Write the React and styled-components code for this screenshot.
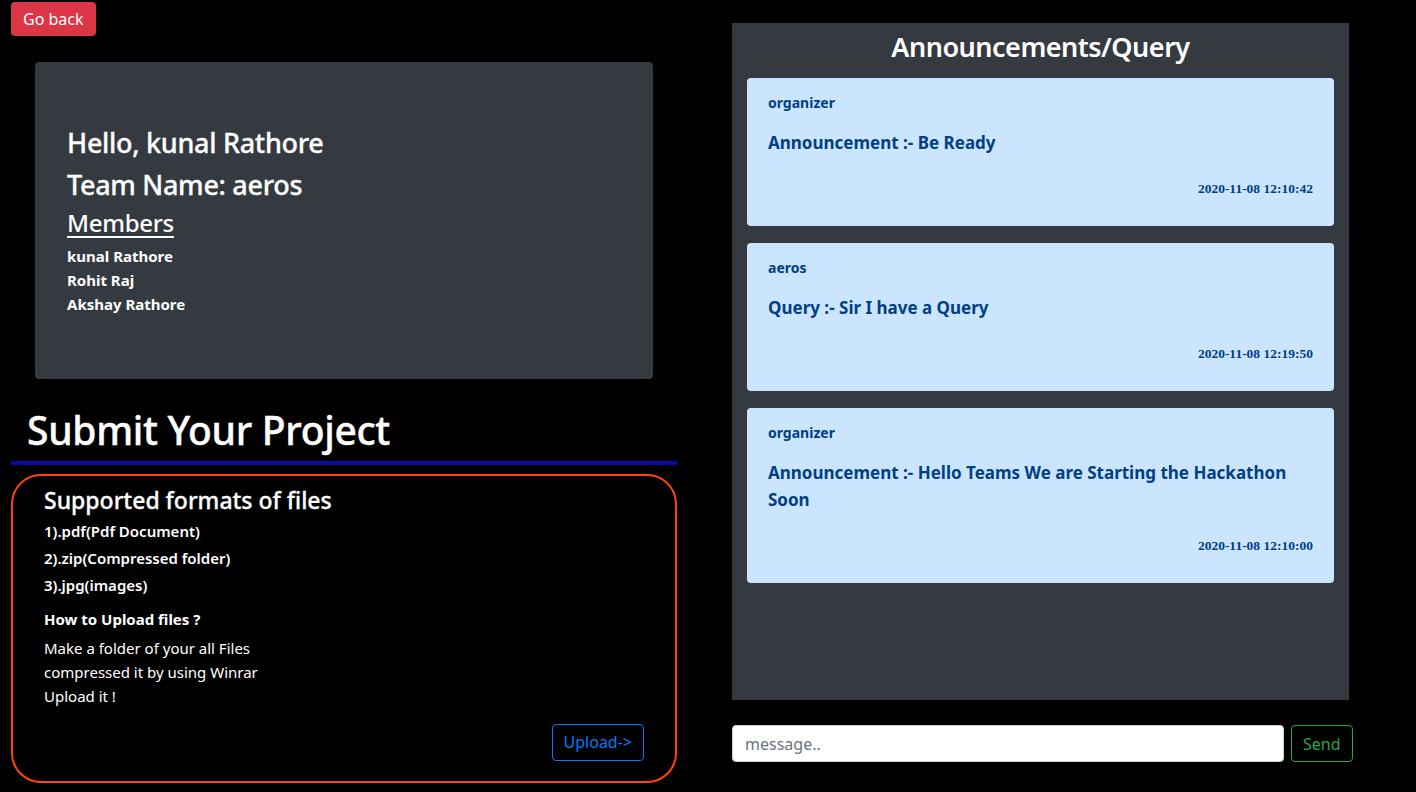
import React from "react";
import styled, { createGlobalStyle } from "styled-components";

const Global = createGlobalStyle`
  html, body {
    margin: 0;
    padding: 0;
    background: #000;
    color: #fff;
    font-family: "Noto Sans", "Open Sans", sans-serif;
    font-size: 16px;
  }
  * { box-sizing: border-box; }
`;

const announcements = [
  { by: "organizer", text: "Announcement :- Be Ready", at: "2020-11-08 12:10:42" },
  { by: "aeros", text: "Query :- Sir I have a Query", at: "2020-11-08 12:19:50" },
  {
    by: "organizer",
    text: "Announcement :- Hello Teams We are Starting the Hackathon Soon",
    at: "2020-11-08 12:10:00",
  },
];

const members = ["kunal Rathore", "Rohit Raj", "Akshay Rathore"];

function App() {
  return (
    <Page>
      <Global />
      <LeftCol>
        <GoBack>Go back</GoBack>
        <Jumbo>
          <Hello>Hello, kunal Rathore</Hello>
          <Hello>Team Name: aeros</Hello>
          <MembersH>Members</MembersH>
          {members.map((m) => (
            <Member key={m}>{m}</Member>
          ))}
        </Jumbo>
        <SubmitH>Submit Your Project</SubmitH>
        <BlueLine />
        <UploadBox>
          <FormatsH>Supported formats of files</FormatsH>
          <Format>1).pdf(Pdf Document)</Format>
          <Format>2).zip(Compressed folder)</Format>
          <Format>3).jpg(images)</Format>
          <HowH>How to Upload files ?</HowH>
          <HowText>
            Make a folder of your all Files
            <br />
            compressed it by using Winrar
            <br />
            Upload it !
          </HowText>
          <UploadRow>
            <OutlineBtn $color="#007bff">Upload-&gt;</OutlineBtn>
          </UploadRow>
        </UploadBox>
      </LeftCol>
      <RightCol>
        <Panel>
          <PanelTitle>Announcements/Query</PanelTitle>
          <CardList>
            {announcements.map((a, i) => (
              <Card key={i}>
                <By>{a.by}</By>
                <Msg>{a.text}</Msg>
                <Stamp>{a.at}</Stamp>
              </Card>
            ))}
          </CardList>
        </Panel>
        <SendRow>
          <MsgInput placeholder="message.." />
          <OutlineBtn $color="#28a745">Send</OutlineBtn>
        </SendRow>
      </RightCol>
    </Page>
  );
}

export default App;

const Page = styled.div`
  display: flex;
  min-height: 792px;
  background: #000;
`;

const LeftCol = styled.div`
  width: 678px;
  flex-shrink: 0;
  padding-left: 11px;
  padding-top: 2px;
  display: flex;
  flex-direction: column;
`;

const GoBack = styled.button`
  align-self: flex-start;
  height: 34px;
  padding: 0 12px;
  background: #dc3545;
  color: #fff;
  border: none;
  border-radius: 4px;
  font-family: inherit;
  font-size: 16px;
`;

const Jumbo = styled.div`
  margin: 26px 0 0 24px;
  width: 618px;
  background: #343a40;
  border-radius: 4px;
  padding: 64px 32px 63px;
`;

const Hello = styled.h3`
  margin: 0 0 8px;
  font-size: 27px;
  font-weight: 500;
  line-height: 33.6px;
  letter-spacing: -0.3px;
  -webkit-text-stroke: 0.3px #fff;
`;

const MembersH = styled.h4`
  margin: 0 0 6px;
  font-size: 24px;
  font-weight: 500;
  line-height: 1.2;
  letter-spacing: -0.3px;
  text-decoration: underline;
  text-underline-offset: 4px;
  text-decoration-thickness: 2px;
`;

const Member = styled.div`
  font-size: 15px;
  font-weight: 700;
  line-height: 24px;
`;

const SubmitH = styled.h1`
  margin: 27px 0 7px 16px;
  font-size: 39px;
  font-weight: 500;
  line-height: 48px;
  letter-spacing: -0.3px;
  -webkit-text-stroke: 0.4px #fff;
`;

const BlueLine = styled.div`
  width: 666px;
  height: 4px;
  background: #0808a8;
`;

const UploadBox = styled.div`
  margin-top: 9px;
  width: 666px;
  height: 309px;
  border: 2px solid #ff4500;
  border-radius: 30px;
  padding: 10px 31px 0 31px;
  display: flex;
  flex-direction: column;
`;

const FormatsH = styled.h4`
  margin: 0 0 3px;
  font-size: 23px;
  font-weight: 500;
  line-height: 29px;
  -webkit-text-stroke: 0.3px #fff;
`;

const Format = styled.div`
  font-size: 15px;
  font-weight: 600;
  line-height: 27px;
`;

const HowH = styled.div`
  margin-top: 8px;
  font-size: 15px;
  font-weight: 700;
  line-height: 24px;
`;

const HowText = styled.p`
  margin: 5px 0 0;
  font-size: 15px;
  line-height: 24px;
`;

const UploadRow = styled.div`
  display: flex;
  justify-content: flex-end;
  margin-top: 16px;
`;

const OutlineBtn = styled.button`
  flex-shrink: 0;
  height: 37px;
  padding: 0 11px;
  background: transparent;
  color: ${(p) => p.$color};
  border: 1px solid ${(p) => p.$color};
  border-radius: 4px;
  font-family: inherit;
  font-size: 16px;
`;

const RightCol = styled.div`
  margin-left: 54px;
  padding-top: 23px;
  width: 630px;
  flex-shrink: 0;
  display: flex;
  flex-direction: column;
`;

const Panel = styled.div`
  width: 617px;
  height: 677px;
  background: #343a40;
  padding: 7px 15px 0;
`;

const PanelTitle = styled.h3`
  margin: 0 0 14px;
  text-align: center;
  font-size: 27px;
  font-weight: 600;
  line-height: 34px;
  letter-spacing: -0.5px;
`;

const CardList = styled.div`
  display: flex;
  flex-direction: column;
  gap: 17px;
`;

const Card = styled.div`
  background: #cce5ff;
  color: #004085;
  border-radius: 4px;
  padding: 14px 21px 28px;
`;

const By = styled.div`
  font-size: 14px;
  font-weight: 700;
  line-height: 22px;
`;

const Msg = styled.div`
  margin-top: 15px;
  font-size: 17px;
  font-weight: 700;
  line-height: 27px;
`;

const Stamp = styled.div`
  margin-top: 24px;
  text-align: right;
  font-family: "Liberation Serif", serif;
  font-size: 13.5px;
  font-weight: 700;
  line-height: 18px;
`;

const SendRow = styled.div`
  margin-top: 25px;
  display: flex;
  gap: 7px;
`;

const MsgInput = styled.input`
  width: 552px;
  flex-shrink: 0;
  height: 37px;
  padding: 0 12px;
  border: 1px solid #ced4da;
  border-radius: 4px;
  font-family: inherit;
  font-size: 16px;
  color: #495057;
  &::placeholder {
    color: #6c757d;
  }
`;
